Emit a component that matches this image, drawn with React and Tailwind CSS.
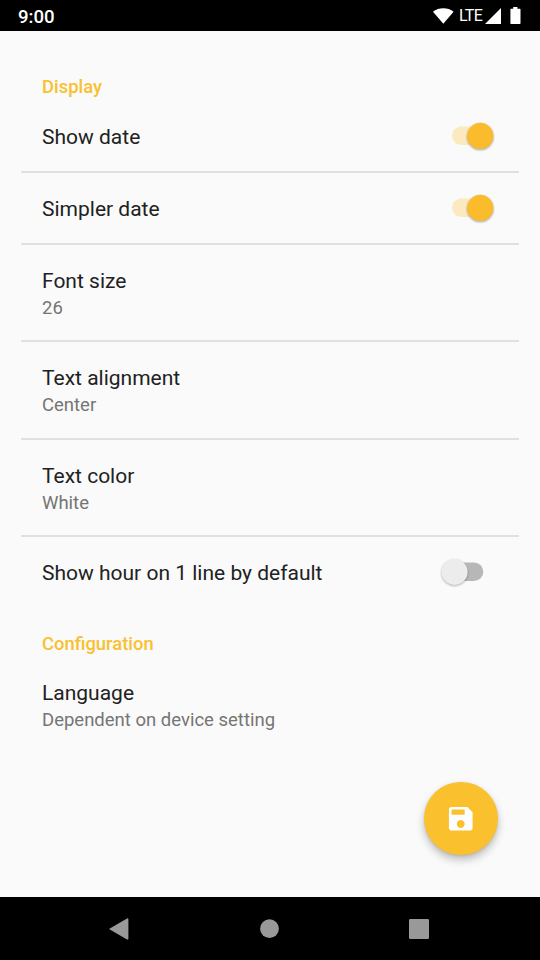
function Switch({ on }) {
  return on ? (
    <svg width="60" height="40" viewBox="0 0 60 40" className="mr-[36px] shrink-0 overflow-visible">
      <rect x="8" y="10.6" width="37" height="18.4" rx="9.2" fill="#fbeac0" />
      <circle cx="36.3" cy="19.9" r="13.1" className="fill-[#fabb2d] drop-shadow-[0_1px_1px_rgba(0,0,0,0.35)]" />
    </svg>
  ) : (
    <svg width="60" height="40" viewBox="0 0 60 40" className="mr-[36px] shrink-0 overflow-visible">
      <rect x="2" y="10.6" width="37.3" height="18.4" rx="9.2" fill="#b7b7b7" />
      <circle cx="10.6" cy="19.9" r="13" className="fill-[#ececec] drop-shadow-[0_1px_1px_rgba(0,0,0,0.3)]" />
    </svg>
  );
}

function Section({ children }) {
  return <h2 className="pl-[42px] text-[18.4px] leading-[24px] font-medium text-[#f9c02f]">{children}</h2>;
}

function Divider() {
  return <div className="mx-[21px] h-[2px] shrink-0 bg-[#e0e0e0]" />;
}

function ToggleRow({ title, on }) {
  return (
    <div className="flex h-[70px] shrink-0 items-center justify-between pl-[42px]">
      <span className="pt-[2px] text-[21px] leading-[26px] text-[#212121]">{title}</span>
      <Switch on={on} />
    </div>
  );
}

function ValueRow({ title, value, className = "h-[95px] pt-[23px]" }) {
  return (
    <div className={`flex shrink-0 flex-col pl-[42px] ${className}`}>
      <span className="text-[21px] leading-[27px] text-[#212121]">{title}</span>
      <span className="text-[18.5px] leading-[26px] text-[#757575]">{value}</span>
    </div>
  );
}

export default function App() {
  return (
    <div className="flex h-[960px] w-[540px] flex-col overflow-hidden bg-[#fafafa] font-[Roboto,sans-serif]">
      <header className="flex h-[31px] shrink-0 items-center justify-between bg-black pr-[19px] pl-[18px] text-white">
        <span className="pt-[2px] text-[18.6px] leading-[24px] font-medium">9:00</span>
        <div className="flex items-center">
          <svg width="21" height="16" viewBox="0 0 21 16" fill="white">
            <path d="M0 3.7C5.6-.9 15-.9 20.6 3.7L10.3 15.8z" />
          </svg>
          <span className="ml-[5px] w-[23px] pt-px text-[16px] leading-[20px] tracking-[-0.6px]">LTE</span>
          <svg className="ml-[3px]" width="16" height="16" viewBox="0 0 16 16" fill="white">
            <path d="M0 16L16 0v16z" />
          </svg>
          <svg className="ml-[9px]" width="11" height="17" viewBox="0 0 11 17" fill="white">
            <path d="M3.2 0h4.2v1.7H10q.5 0 .5.6v14q0 .7-.6.7H1q-.6 0-.6-.7v-14q0-.6.6-.6h2.2z" />
          </svg>
        </div>
      </header>

      <main className="relative flex h-[866px] shrink-0 flex-col pt-[44px]">
        <Section>Display</Section>
        <div className="h-[2px] shrink-0" />
        <ToggleRow title="Show date" on />
        <Divider />
        <ToggleRow title="Simpler date" on />
        <Divider />
        <ValueRow title="Font size" value="26" />
        <Divider />
        <ValueRow title="Text alignment" value="Center" className="h-[96px] pt-[23px]" />
        <Divider />
        <ValueRow title="Text color" value="White" />
        <Divider />
        <ToggleRow title="Show hour on 1 line by default" />
        <div className="h-[25px] shrink-0" />
        <Section>Configuration</Section>
        <ValueRow title="Language" value="Dependent on device setting" className="h-[96px] pt-[24px]" />

        <button
          aria-label="Save"
          className="absolute top-[750.5px] left-[424.3px] flex h-[73.5px] w-[73.5px] items-center justify-center rounded-full bg-[#fbc02d] shadow-[0_5px_9px_rgba(0,0,0,0.24),0_1px_3px_rgba(0,0,0,0.1)]"
        >
          <svg width="31.5" height="31.5" viewBox="0 0 24 24" fill="white">
            <path d="M17 3H5c-1.11 0-2 .9-2 2v14c0 1.1.89 2 2 2h14c1.1 0 2-.9 2-2V7l-4-4zm-5 16c-1.66 0-3-1.34-3-3s1.34-3 3-3 3 1.34 3 3-1.34 3-3 3zm3-10H5V5h10v4z" />
          </svg>
        </button>
      </main>

      <nav className="flex h-[63px] shrink-0 items-center justify-between bg-black pr-[111px] pl-[109px]">
        <svg width="20" height="22" viewBox="0 0 20 22" fill="#999999">
          <path d="M.8 10.4L18 .4q1.4-.5 1.4 1v19.2q0 1.5-1.4.8L.8 11.6q-.9-.6 0-1.2z" />
        </svg>
        <svg width="20" height="20" viewBox="0 0 20 20" fill="#999999">
          <circle cx="10.5" cy="9.7" r="9.4" />
        </svg>
        <svg width="20" height="20" viewBox="0 0 20 20" fill="#999999">
          <rect width="20" height="20" rx="1.3" />
        </svg>
      </nav>
    </div>
  );
}
